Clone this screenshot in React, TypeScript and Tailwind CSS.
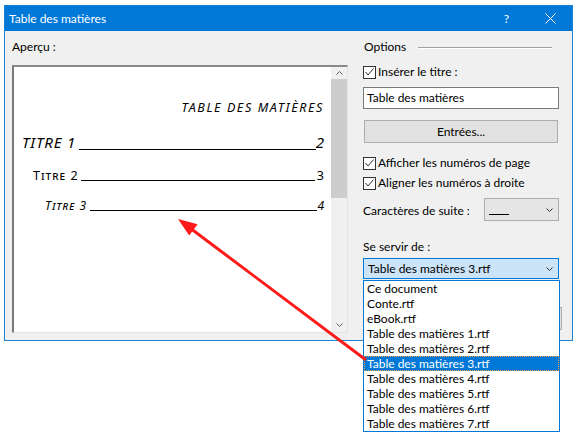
import React from "react";

const listItems = [
  "Ce document",
  "Conte.rtf",
  "eBook.rtf",
  "Table des matières 1.rtf",
  "Table des matières 2.rtf",
  "Table des matières 3.rtf",
  "Table des matières 4.rtf",
  "Table des matières 5.rtf",
  "Table des matières 6.rtf",
  "Table des matières 7.rtf",
];

function Chevron({ up = false, color = "#333" }: { up?: boolean; color?: string }) {
  return (
    <svg width="7" height="4" viewBox="0 0 7 4" className="block">
      <path
        d={up ? "M0.5 3.5 L3.5 0.5 L6.5 3.5" : "M0.5 0.5 L3.5 3.5 L6.5 0.5"}
        fill="none"
        stroke={color}
        strokeWidth="1"
      />
    </svg>
  );
}

function Checkbox({ label }: { label: string }) {
  return (
    <div className="flex items-center h-[16px]">
      <div className="w-[13px] h-[13px] border border-[#333] bg-white flex items-center justify-center">
        <svg width="11" height="11" viewBox="0 0 11 11" className="block">
          <path d="M1.5 5 L4 8 L9.5 1.5" fill="none" stroke="#333" strokeWidth="1" />
        </svg>
      </div>
      <span className="ml-[2px] leading-[16px]">{label}</span>
    </div>
  );
}

function Preview() {
  return (
    <div className="mt-[10px] h-[268px] flex border-l-2 border-t-2 border-r border-b border-l-[#7a7a7a] border-t-[#8a8a8a] border-r-[#e3e3e3] border-b-[#e3e3e3] bg-white">
      <div className="flex-1 flex flex-col font-['Noto_Sans',sans-serif] italic text-black">
        <div className="mt-[33px] pr-[7px] text-right text-[12.5px] leading-[16px] tracking-[1.6px]">
          TABLE DES MATIÈRES
        </div>
        <div className="mt-[17px] pl-[8px] pr-[7px] flex items-baseline text-[15px] leading-[18px]">
          <span className="tracking-[0.8px]">TITRE 1</span>
          <span className="flex-1 h-[1.5px] bg-black relative top-[2px] ml-[3px]" />
          <span>2</span>
        </div>
        <div className="mt-[17px] pl-[19px] pr-[7px] flex items-baseline text-[12.5px] leading-[16px] not-italic">
          <span className="tracking-[1px] [font-variant:small-caps]">Titre 2</span>
          <span className="flex-1 h-[1.5px] bg-black relative top-[1px] ml-[2px]" />
          <span className="ml-[2px]">3</span>
        </div>
        <div className="mt-[14px] pl-[31px] pr-[7px] flex items-baseline text-[12px] leading-[16px]">
          <span className="tracking-[1px] [font-variant:small-caps]">Titre 3</span>
          <span className="flex-1 h-[1.5px] bg-black relative top-[1px] ml-[3px]" />
          <span>4</span>
        </div>
      </div>
      <div className="w-[16px] bg-[#f0f0f0] flex flex-col">
        <div className="h-[12px] flex items-center justify-center">
          <Chevron up color="#606060" />
        </div>
        <div className="h-[119px] bg-[#cdcdcd]" />
        <div className="flex-1" />
        <div className="h-[14px] flex items-center justify-center">
          <Chevron color="#606060" />
        </div>
      </div>
    </div>
  );
}

export default function App() {
  return (
    <div className="relative w-[580px] h-[438px] bg-white pt-[5px] pl-[4px] overflow-hidden font-['Lato',sans-serif] text-[12px] text-black">
      {/* Window */}
      <div className="w-[569px] h-[336px] border border-[#1883d7] flex flex-col">
        <div className="h-[25px] bg-[#0078d7] text-white flex items-center pl-[4px]">
          <span className="leading-[16px]">Table des matières</span>
          <span className="ml-auto leading-[16px]">?</span>
          <svg width="11" height="11" viewBox="0 0 11 11" className="block ml-[36px] mr-[16px]">
            <path d="M0.5 0.5 L10.5 10.5 M10.5 0.5 L0.5 10.5" stroke="white" strokeWidth="1" />
          </svg>
        </div>

        <div className="flex-1 bg-[#f0f0f0] flex pl-[7px]">
          {/* Left column */}
          <div className="w-[336px] flex flex-col">
            <div className="mt-[8px] leading-[16px]">Aperçu :</div>
            <Preview />
          </div>

          {/* Right column */}
          <div className="ml-[15px] w-[199px] flex flex-col">
            <div className="mt-[8px] flex items-center h-[16px]">
              <span className="leading-[16px] pl-[1px]">Options</span>
              <div className="flex-1 ml-[12px] mr-[10px] h-[2px] border-t border-[#a0a0a0] border-b border-b-white relative top-[1px]" />
            </div>
            <div className="mt-[9px]">
              <Checkbox label="Insérer le titre :" />
            </div>
            <div className="mt-[7px] w-[196px] h-[22px] border border-[#7a7a7a] bg-white flex items-center pl-[3px]">
              Table des matières
            </div>
            <div className="mt-[11px] ml-[1px] w-[194px] h-[23px] border border-[#adadad] bg-[#e1e1e1] flex items-center justify-center">
              Entrées...
            </div>
            <div className="mt-[12px]">
              <Checkbox label="Afficher les numéros de page" />
            </div>
            <div className="mt-[4px]">
              <Checkbox label="Aligner les numéros à droite" />
            </div>
            <div className="mt-[7px] flex items-center h-[23px]">
              <span className="w-[121px] leading-[16px] pt-[2px]">Caractères de suite :</span>
              <div className="w-[75px] h-[23px] border border-[#adadad] bg-[#e5e5e5] flex items-center pl-[4px] pr-[5px]">
                <div className="w-[20px] h-[1px] bg-black mt-[10px]" />
                <div className="ml-auto">
                  <Chevron />
                </div>
              </div>
            </div>
            <div className="mt-[18px] leading-[16px]">Se servir de :</div>
            <div className="mt-[3px] w-[196px] h-[21px] border border-[#0078d7] bg-[#cce4f7] flex items-center pl-[4px] pr-[5px]">
              <span>Table des matières 3.rtf</span>
              <div className="ml-auto">
                <Chevron />
              </div>
            </div>
            <div className="mt-[28px] self-end w-[75px] h-[23px] border border-[#adadad] bg-[#e1e1e1]" />
          </div>
        </div>
      </div>

      {/* Open dropdown list */}
      <div className="absolute left-[363px] top-[280px] w-[197px] border border-[#0078d7] bg-white">
        {listItems.map((item, i) =>
          i === 5 ? (
            <div
              key={item}
              className="h-[15px] leading-[13px] pl-[2px] bg-[#0078d7] text-white border border-dotted border-[#f0a040]"
            >
              {item}
            </div>
          ) : (
            <div key={item} className="h-[15px] leading-[15px] pl-[3px]">
              {item}
            </div>
          )
        )}
      </div>

      {/* Annotation arrow */}
      <svg width="580" height="438" className="absolute left-0 top-0 pointer-events-none">
        <line x1="366" y1="360" x2="190" y2="228" stroke="#ff1a1a" strokeWidth="3" />
        <polygon points="178,219 197.6,224.2 189.2,235.4" fill="#ff1a1a" />
      </svg>
    </div>
  );
}
